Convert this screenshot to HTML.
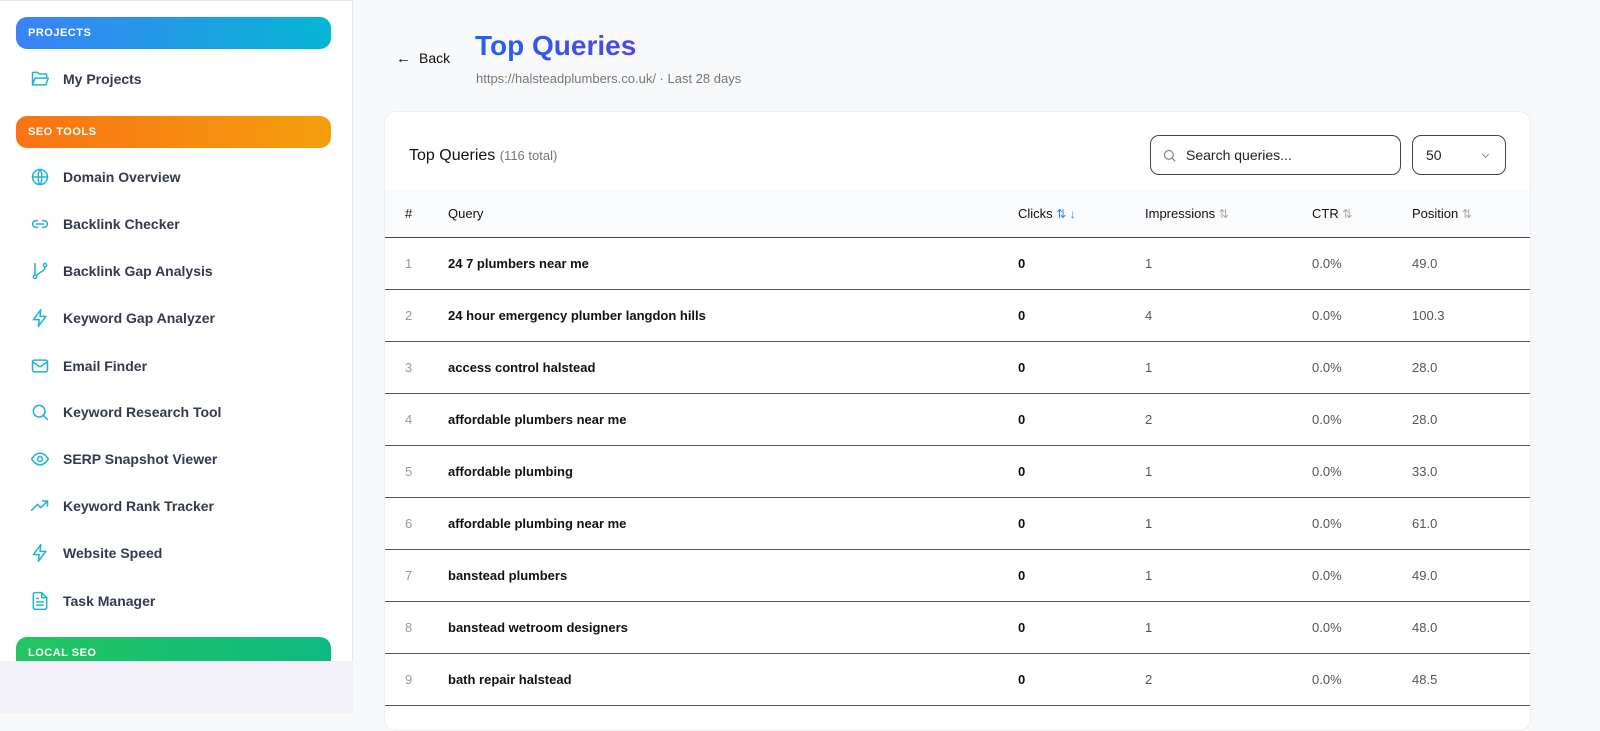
<!DOCTYPE html>
<html><head><meta charset="utf-8"><style>
*{box-sizing:border-box;margin:0;padding:0}
body{width:1600px;height:712px;overflow:hidden;background:#f8f9fb;font-family:"Liberation Sans",sans-serif;position:relative}
.sb{position:absolute;left:0;top:0;width:353px;height:712px;background:#fff;border-right:1px solid #e5e7eb;border-top:1px solid #e5e7eb}
.hd{position:absolute;left:16px;width:315px;height:32px;border-radius:11px;color:#fff;font-weight:bold;font-size:11px;letter-spacing:.5px;padding-left:12px;line-height:32px}
.it{position:absolute;left:30px;height:24px;display:flex;align-items:center;font-size:14px;font-weight:bold;color:#333a4d}
.it svg{width:20px;height:20px;margin-right:13px;fill:none;stroke:#1fb3d6;stroke-width:1.8;stroke-linecap:round;stroke-linejoin:round}
.low{position:absolute;left:0;top:660px;width:353px;height:52px;background:#f3f2fb}
.card{position:absolute;left:384px;top:111px;width:1147px;height:620px;background:#fff;border:1px solid #eceef2;border-radius:12px;overflow:hidden}
table{position:absolute;top:78px;left:0;width:1147px;border-collapse:collapse;font-size:13px;color:#111}
th{height:47px;background:#fafbfc;text-align:left;font-weight:normal;border-bottom:1.5px solid #444}
td{height:52px;border-bottom:1.5px solid #555}
.n{color:#999}
.g{color:#555}
.s{color:#aaa;font-size:12px}
</style></head><body>
<div class="sb">
<div class="hd" style="top:16px;background:linear-gradient(90deg,#3b82f6,#06b6d4)">PROJECTS</div>
<div class="it" style="top:66px"><svg viewBox="0 0 24 24"><path d="M3 19V5a1 1 0 0 1 1-1h5l2 2h8a1 1 0 0 1 1 1v3M3 19l3-8h16l-3 8z"/></svg>My Projects</div>
<div class="hd" style="top:115px;background:linear-gradient(90deg,#f97316,#f59e0b)">SEO TOOLS</div>
<div class="it" style="top:164px"><svg viewBox="0 0 24 24"><circle cx="12" cy="12" r="9"/><path d="M3 12h18M12 3c3 3 3 15 0 18M12 3c-3 3-3 15 0 18"/></svg>Domain Overview</div>
<div class="it" style="top:211px"><svg viewBox="0 0 24 24"><path d="M9 8H7a4 4 0 0 0 0 8h2M15 8h2a4 4 0 0 1 0 8h-2M8 12h8"/></svg>Backlink Checker</div>
<div class="it" style="top:258px"><svg viewBox="0 0 24 24"><circle cx="6" cy="19" r="2"/><circle cx="18" cy="5" r="2"/><path d="M6 3v14M18 7c0 6-8 6-10 11"/></svg>Backlink Gap Analysis</div>
<div class="it" style="top:305px"><svg viewBox="0 0 24 24"><path d="M13 2L4 14h7l-1 8 9-12h-7z"/></svg>Keyword Gap Analyzer</div>
<div class="it" style="top:353px"><svg viewBox="0 0 24 24"><rect x="3" y="5" width="18" height="14" rx="2"/><path d="M3 7l9 6 9-6"/></svg>Email Finder</div>
<div class="it" style="top:399px"><svg viewBox="0 0 24 24"><circle cx="11" cy="11" r="7"/><path d="M21 21l-5-5"/></svg>Keyword Research Tool</div>
<div class="it" style="top:446px"><svg viewBox="0 0 24 24"><path d="M2 12s4-7 10-7 10 7 10 7-4 7-10 7S2 12 2 12z"/><circle cx="12" cy="12" r="3"/></svg>SERP Snapshot Viewer</div>
<div class="it" style="top:493px"><svg viewBox="0 0 24 24"><path d="M2 17l7-7 4 4 8-8M15 6h6v6"/></svg>Keyword Rank Tracker</div>
<div class="it" style="top:540px"><svg viewBox="0 0 24 24"><path d="M13 2L4 14h7l-1 8 9-12h-7z"/></svg>Website Speed</div>
<div class="it" style="top:588px"><svg viewBox="0 0 24 24"><path d="M14 2H6a2 2 0 0 0-2 2v16a2 2 0 0 0 2 2h12a2 2 0 0 0 2-2V8z"/><path d="M14 2v6h6M8 13h8M8 17h8M8 9h2"/></svg>Task Manager</div>
<div class="hd" style="top:636px;height:40px;line-height:32px;background:linear-gradient(90deg,#22c55e,#10b981)">LOCAL SEO</div>
<div class="low"></div>
</div>
<div style="position:absolute;left:396px;top:50px;font-size:14px;color:#111"><span style="font-size:15px;margin-right:8px">&#8592;</span>Back</div>
<div style="position:absolute;left:475px;top:30px;font-size:28px;font-weight:bold;background:linear-gradient(90deg,#2563eb,#4f46e5);-webkit-background-clip:text;color:transparent">Top Queries</div>
<div style="position:absolute;left:476px;top:71px;font-size:13px;color:#777">https://halsteadplumbers.co.uk/ · Last 28 days</div>
<div class="card">
<div style="position:absolute;left:24px;top:35px;font-size:16px;color:#111">Top Queries <span style="font-size:13px;color:#777">(116 total)</span></div>
<div style="position:absolute;left:765px;top:23px;width:251px;height:40px;border:1px solid #444;border-radius:9px;font-size:14px;color:#222;line-height:38px;padding-left:35px">
<svg style="position:absolute;left:11px;top:12px" width="15" height="15" viewBox="0 0 24 24" fill="none" stroke="#888" stroke-width="2"><circle cx="11" cy="11" r="7"/><path d="M21 21l-5-5"/></svg>Search queries...</div>
<div style="position:absolute;left:1027px;top:23px;width:94px;height:40px;border:1px solid #444;border-radius:9px;font-size:14px;color:#222;line-height:38px;padding-left:13px">50<svg style="position:absolute;right:14px;top:14px" width="11" height="11" viewBox="0 0 24 24" fill="none" stroke="#888" stroke-width="2"><path d="M5 9l7 7 7-7"/></svg></div>
<table>
<tr><th style="width:63px;padding-left:20px">#</th><th style="width:570px">Query</th><th style="width:127px">Clicks <span style="color:#3b82f6;font-size:12px">⇅ ↓</span></th><th style="width:167px">Impressions <span class="s">⇅</span></th><th style="width:100px">CTR <span class="s">⇅</span></th><th>Position <span class="s">⇅</span></th></tr>
<tr><td class="n" style="padding-left:20px">1</td><td><b>24 7 plumbers near me</b></td><td><b>0</b></td><td class="g">1</td><td class="g">0.0%</td><td class="g">49.0</td></tr>
<tr><td class="n" style="padding-left:20px">2</td><td><b>24 hour emergency plumber langdon hills</b></td><td><b>0</b></td><td class="g">4</td><td class="g">0.0%</td><td class="g">100.3</td></tr>
<tr><td class="n" style="padding-left:20px">3</td><td><b>access control halstead</b></td><td><b>0</b></td><td class="g">1</td><td class="g">0.0%</td><td class="g">28.0</td></tr>
<tr><td class="n" style="padding-left:20px">4</td><td><b>affordable plumbers near me</b></td><td><b>0</b></td><td class="g">2</td><td class="g">0.0%</td><td class="g">28.0</td></tr>
<tr><td class="n" style="padding-left:20px">5</td><td><b>affordable plumbing</b></td><td><b>0</b></td><td class="g">1</td><td class="g">0.0%</td><td class="g">33.0</td></tr>
<tr><td class="n" style="padding-left:20px">6</td><td><b>affordable plumbing near me</b></td><td><b>0</b></td><td class="g">1</td><td class="g">0.0%</td><td class="g">61.0</td></tr>
<tr><td class="n" style="padding-left:20px">7</td><td><b>banstead plumbers</b></td><td><b>0</b></td><td class="g">1</td><td class="g">0.0%</td><td class="g">49.0</td></tr>
<tr><td class="n" style="padding-left:20px">8</td><td><b>banstead wetroom designers</b></td><td><b>0</b></td><td class="g">1</td><td class="g">0.0%</td><td class="g">48.0</td></tr>
<tr><td class="n" style="padding-left:20px">9</td><td><b>bath repair halstead</b></td><td><b>0</b></td><td class="g">2</td><td class="g">0.0%</td><td class="g">48.5</td></tr>
</table>
</div>
</body></html>
